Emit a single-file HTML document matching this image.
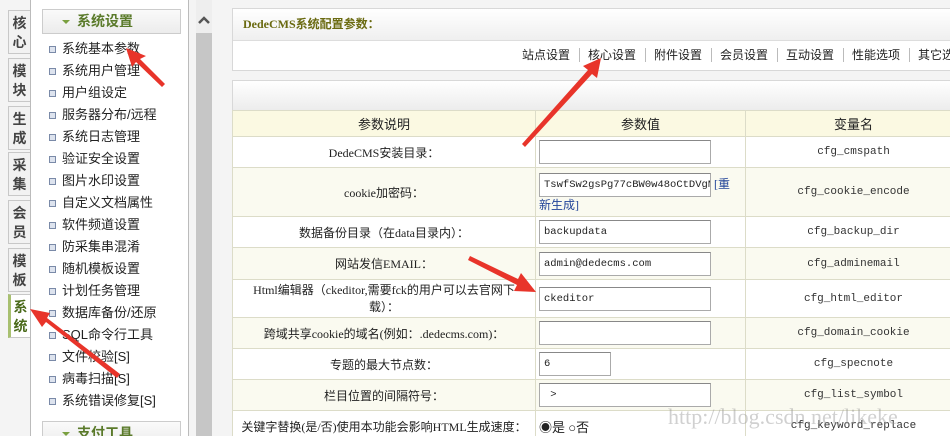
<!DOCTYPE html>
<html><head><meta charset="utf-8"><style>
*{margin:0;padding:0;box-sizing:border-box}
html,body{width:950px;height:436px;overflow:hidden}
body{background:#f4f4f4;position:relative;font-family:"Liberation Sans","Noto Sans CJK SC",sans-serif;font-size:12px;color:#222}
.abs{position:absolute}
.tab{position:absolute;left:8px;width:22px;height:44px;border:1px solid #c8c8c8;border-right:none;background:#f2f2f2;font-size:14px;font-weight:bold;color:#444;text-align:center;line-height:19px;padding-top:3px;font-family:"Noto Sans CJK SC",sans-serif}
.menu{position:absolute;left:30px;top:-2px;width:159px;height:440px;background:#fff;border:1px solid #bbb}
.mh{position:absolute;left:11px;width:139px;height:25px;border:1px solid #ccc;background:linear-gradient(#fafafa,#ececec);font-weight:bold;font-size:14px;color:#5a7a2a;line-height:23px;padding-left:34px}
.mh:before{content:"";position:absolute;left:19px;top:10px;border:4px solid transparent;border-top:4px solid #7aa040}
.it{position:absolute;left:18px;font-size:13px;color:#222;height:22px;line-height:22px;padding-left:13px;white-space:nowrap}
.it:before{content:"";position:absolute;left:0;top:8px;width:5px;height:5px;border:1px solid #7a8aa8;background:#dde3ee}
table{position:absolute;left:232px;top:110px;border-collapse:collapse;width:730px;font-size:12px}
td{border:1px solid #dcdcc8;text-align:center;vertical-align:middle;font-family:"Liberation Serif","Noto Sans CJK SC",serif;padding:0}
td.c{font-family:"Liberation Mono",monospace;font-size:11px;color:#333}
td.v{text-align:left;padding-left:3px}
.in{display:inline-flex;align-items:center;vertical-align:middle;width:172px;height:24px;border:1px solid #aaa;border-top-color:#888;background:#fff;font-family:"Liberation Mono",monospace;font-size:10.5px;padding-left:4px;text-align:left;overflow:hidden;white-space:nowrap}
.nv{position:absolute;top:46px;font-size:12px;color:#222;white-space:nowrap}
.sp{position:absolute;top:48px;width:1px;height:14px;background:#bbb}
</style></head><body>
<div class="tab" style="top:10px">核<br>心</div>
<div class="tab" style="top:58px">模<br>块</div>
<div class="tab" style="top:106px">生<br>成</div>
<div class="tab" style="top:152px">采<br>集</div>
<div class="tab" style="top:200px">会<br>员</div>
<div class="tab" style="top:248px">模<br>板</div>
<div class="tab" style="top:294px;background:#fff;border-left:3px solid #a8c070;color:#4a6a1a">系<br>统</div>
<div class="menu">
<div class="mh" style="top:10px">系统设置</div>
<div class="it" style="top:39px">系统基本参数</div>
<div class="it" style="top:61px">系统用户管理</div>
<div class="it" style="top:83px">用户组设定</div>
<div class="it" style="top:105px">服务器分布/远程</div>
<div class="it" style="top:127px">系统日志管理</div>
<div class="it" style="top:149px">验证安全设置</div>
<div class="it" style="top:171px">图片水印设置</div>
<div class="it" style="top:193px">自定义文档属性</div>
<div class="it" style="top:215px">软件频道设置</div>
<div class="it" style="top:237px">防采集串混淆</div>
<div class="it" style="top:259px">随机模板设置</div>
<div class="it" style="top:281px">计划任务管理</div>
<div class="it" style="top:303px">数据库备份/还原</div>
<div class="it" style="top:325px">SQL命令行工具</div>
<div class="it" style="top:347px">文件校验[S]</div>
<div class="it" style="top:369px">病毒扫描[S]</div>
<div class="it" style="top:391px">系统错误修复[S]</div>
<div class="mh" style="top:422px">支付工具</div>
</div>
<div class="abs" style="left:196px;top:0;width:16px;height:436px;background:#eee"></div>
<div class="abs" style="left:196px;top:33px;width:16px;height:403px;background:#c6c6c6"></div>
<svg class="abs" style="left:196px;top:14px" width="16" height="12"><path d="M3 9 L8 4 L13 9" stroke="#555" stroke-width="2.5" fill="none"/></svg>
<div class="abs" style="left:232px;top:8px;width:730px;height:63px;border:1px solid #d8d8d8;background:#fff"></div>
<div class="abs" style="left:233px;top:9px;width:730px;height:32px;background:linear-gradient(#fff,#efefef);border-bottom:1px solid #ddd;font-weight:bold;font-size:12px;color:#6a6a10;line-height:30px;padding-left:10px;font-family:'Liberation Serif','Noto Sans CJK SC',serif">DedeCMS系统配置参数：</div>
<div class="nv" style="left:522px">站点设置</div><div class="sp" style="left:579px"></div>
<div class="nv" style="left:588px">核心设置</div><div class="sp" style="left:645px"></div>
<div class="nv" style="left:654px">附件设置</div><div class="sp" style="left:711px"></div>
<div class="nv" style="left:720px">会员设置</div><div class="sp" style="left:777px"></div>
<div class="nv" style="left:786px">互动设置</div><div class="sp" style="left:843px"></div>
<div class="nv" style="left:852px">性能选项</div><div class="sp" style="left:909px"></div>
<div class="nv" style="left:918px">其它选项</div>
<div class="abs" style="left:232px;top:80px;width:730px;height:31px;border:1px solid #d8d8d8;background:linear-gradient(#fff,#ececec)"></div>
<table>
<tr style="height:26px;background:#fbf9e2"><td style="width:303px;font-size:13px">参数说明</td><td style="width:210px;font-size:13px">参数值</td><td style="font-size:13px">变量名</td></tr>
<tr style="height:31px;background:#fff"><td>DedeCMS安装目录：</td><td class="v"><span class="in"></span></td><td class="c">cfg_cmspath</td></tr>
<tr style="height:49px;background:#fafaf0"><td>cookie加密码：</td><td class="v" style="line-height:17px;padding-top:3px"><span class="in">TswfSw2gsPg77cBW0w48oCtDVgM7</span> <span style="color:#224499">[重<br>新生成]</span></td><td class="c">cfg_cookie_encode</td></tr>
<tr style="height:31px;background:#fff"><td>数据备份目录（在data目录内）：</td><td class="v"><span class="in">backupdata</span></td><td class="c">cfg_backup_dir</td></tr>
<tr style="height:32px;background:#fafaf0"><td>网站发信EMAIL：</td><td class="v"><span class="in">admin@dedecms.com</span></td><td class="c">cfg_adminemail</td></tr>
<tr style="height:38px;background:#fff"><td style="line-height:17px">Html编辑器（ckeditor,需要fck的用户可以去官网下<br>载）：</td><td class="v"><span class="in">ckeditor</span></td><td class="c">cfg_html_editor</td></tr>
<tr style="height:31px;background:#fafaf0"><td>跨域共享cookie的域名(例如：.dedecms.com)：</td><td class="v"><span class="in"></span></td><td class="c">cfg_domain_cookie</td></tr>
<tr style="height:31px;background:#fff"><td>专题的最大节点数：</td><td class="v"><span class="in" style="width:72px">6</span></td><td class="c">cfg_specnote</td></tr>
<tr style="height:31px;background:#fafaf0"><td>栏目位置的间隔符号：</td><td class="v"><span class="in">&nbsp;&gt;</span></td><td class="c">cfg_list_symbol</td></tr>
<tr style="height:31px;background:#fff"><td>关键字替换(是/否)使用本功能会影响HTML生成速度：</td><td class="v" style="font-size:13px">◉是 ○否</td><td class="c">cfg_keyword_replace</td></tr>
</table>
<div class="abs" style="left:668px;top:404px;font-size:22px;color:rgba(150,150,150,.45);font-family:'Liberation Serif',serif;white-space:nowrap">http://blog.csdn.net/likeke</div>
<svg class="abs" style="left:0;top:0" width="950" height="436">
<g fill="#e8342a">
<polygon points="165,84 162,87 136,62 132,67 126,48 146,56 140,59"/>
<polygon points="522,144 525,147 592,74 597,78 601,58 583,66 588,70"/>
<polygon points="468,260 470,256 518,279 521,273 536,292 514,291 517,285"/>
<polygon points="120,374 117,378 46,322 42,327 30,309 50,313 47,318"/>
</g>
</svg>
</body></html>
